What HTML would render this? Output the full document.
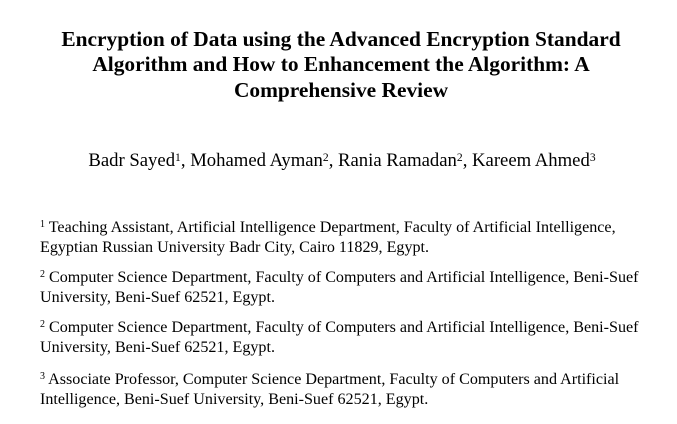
<!DOCTYPE html>
<html><head><meta charset="utf-8"><style>
html,body{margin:0;padding:0;background:#fff;width:677px;height:424px;overflow:hidden;}
body{position:relative;font-family:"Liberation Serif",serif;color:#000;}
.l{position:absolute;white-space:nowrap;line-height:1;}
.t{font-weight:bold;font-size:21.4px;left:0;width:682px;text-align:center;}
.a{font-size:18.7px;left:0;width:684px;text-align:center;}
.f{font-size:16.1px;left:40px;}
sup{font-size:0.62em;vertical-align:0;position:relative;top:-0.5em;}
</style></head><body>
<div class="l t" style="top:29px">Encryption of Data using the Advanced Encryption Standard</div>
<div class="l t" style="top:54px">Algorithm and How to Enhancement the Algorithm: A</div>
<div class="l t" style="top:80px">Comprehensive Review</div>
<div class="l a" style="top:152.3px">Badr Sayed<sup>1</sup>, Mohamed Ayman<sup>2</sup>, Rania Ramadan<sup>2</sup>, Kareem Ahmed<sup>3</sup></div>
<div class="l f" style="top:219.8px"><sup>1</sup> Teaching Assistant, Artificial Intelligence Department, Faculty of Artificial Intelligence,</div>
<div class="l f" style="top:239.8px">Egyptian Russian University Badr City, Cairo 11829, Egypt.</div>
<div class="l f" style="top:269.8px"><sup>2</sup> Computer Science Department, Faculty of Computers and Artificial Intelligence, Beni-Suef</div>
<div class="l f" style="top:289.8px">University, Beni-Suef 62521, Egypt.</div>
<div class="l f" style="top:319.8px"><sup>2</sup> Computer Science Department, Faculty of Computers and Artificial Intelligence, Beni-Suef</div>
<div class="l f" style="top:339.8px">University, Beni-Suef 62521, Egypt.</div>
<div class="l f" style="top:371.5px"><sup>3</sup> Associate Professor, Computer Science Department, Faculty of Computers and Artificial</div>
<div class="l f" style="top:391.5px">Intelligence, Beni-Suef University, Beni-Suef 62521, Egypt.</div>
</body></html>
